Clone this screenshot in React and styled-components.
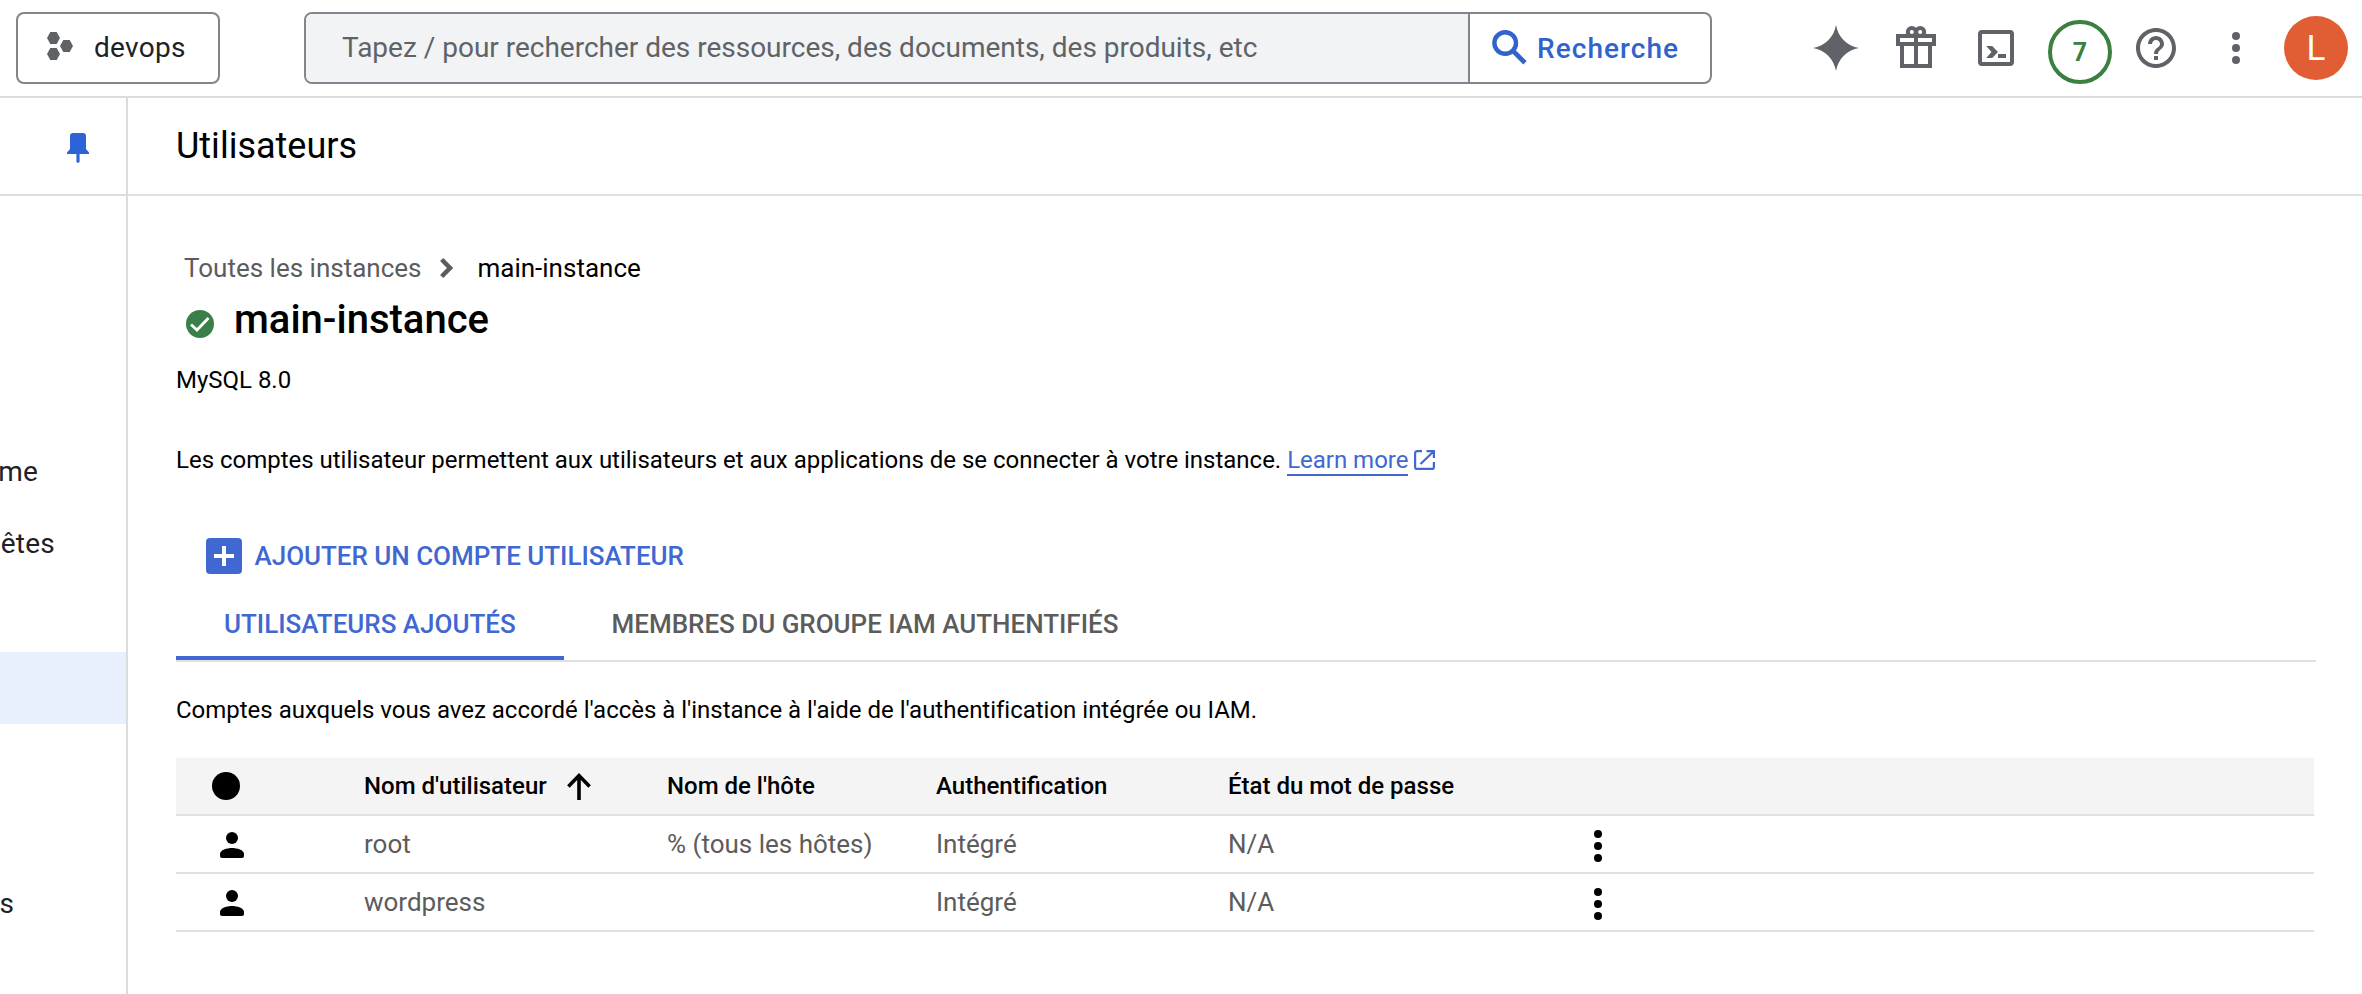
import React from "react";
import styled, { createGlobalStyle } from "styled-components";

const GlobalStyle = createGlobalStyle`
  * { box-sizing: border-box; }
  body { margin: 0; background: #fff; color: #000; font-family: Roboto, "Liberation Sans", sans-serif; overflow: hidden; }
  button, h1, h2, p { margin: 0; padding: 0; font: inherit; }
  button { border: 0; background: none; color: inherit; }
  svg { display: block; flex: none; }
`;

const Page = styled.div`
  height: 994px;
  display: flex;
  flex-direction: column;
  overflow: hidden;
`;

const TopBar = styled.header`
  flex: none;
  height: 98px;
  border-bottom: 2px solid #dadce0;
  padding: 0 14px 0 16px;
  display: flex;
  align-items: center;
`;

const ProjectButton = styled.button`
  width: 204px;
  height: 72px;
  border: 2px solid #80868b;
  border-radius: 8px;
  padding-left: 28px;
  display: flex;
  align-items: center;
  gap: 20px;
  font-size: 28px;
  line-height: 34px;
  letter-spacing: 0.3px;
  color: #202124;
`;

const SearchBar = styled.div`
  width: 1408px;
  height: 72px;
  margin-left: 84px;
  border: 2px solid #80868b;
  border-radius: 8px;
  display: flex;
  overflow: hidden;
`;

const SearchField = styled.div`
  width: 1164px;
  border-right: 2px solid #80868b;
  background: #f1f3f4;
  padding-left: 36px;
  line-height: 68px;
  font-size: 28px;
  letter-spacing: -0.01px;
  color: #5f6368;
`;

const SearchButton = styled.button`
  display: flex;
  align-items: center;
  padding-left: 22px;
  gap: 9px;
  font-size: 28px;
  font-weight: 500;
  letter-spacing: 1.05px;
  color: #3063cc;
`;

const Tools = styled.div`
  margin-left: auto;
  display: flex;
  align-items: center;
  color: #5f6368;
`;

const Tool = styled.div`
  width: 80px;
  display: flex;
  justify-content: center;
`;

const CountBadge = styled.div`
  width: 64px;
  height: 64px;
  margin: 8px 4px 0 12px;
  border: 4px solid #3b8040;
  border-radius: 50%;
  color: #3b8040;
  display: flex;
  align-items: center;
  justify-content: center;
  font-size: 25px;
  font-weight: 700;
`;

const Avatar = styled.div`
  width: 64px;
  height: 64px;
  margin-left: 8px;
  border-radius: 50%;
  background: #e15d33;
  color: #fff;
  text-align: center;
  line-height: 66px;
  font-size: 35px;
`;

const Body = styled.div`
  flex: 1;
  display: flex;
`;

const Sidebar = styled.nav`
  flex: none;
  width: 128px;
  border-right: 2px solid #dadce0;
`;

const PinRow = styled.div`
  height: 98px;
  border-bottom: 2px solid #dadce0;
  display: flex;
  align-items: center;
  justify-content: flex-end;
  padding: 4px 37px 0 0;
  color: #2c64d8;
`;

const NavList = styled.div`
  padding-top: 240px;
`;

const NavItem = styled.div`
  height: 72px;
  line-height: 71px;
  text-indent: ${(p) => p.$indent || 0}px;
  font-size: 28px;
  letter-spacing: 0.2px;
  color: #202124;
  background: ${(p) => (p.$active ? "#e8f0fe" : "transparent")};
`;

const Main = styled.main`
  flex: 1;
`;

const PageTitle = styled.h1`
  height: 98px;
  border-bottom: 2px solid #e0e0e0;
  padding-left: 48px;
  line-height: 96px;
  font-size: 36px;
  font-weight: 400;
`;

const Content = styled.div`
  padding: 54px 46px 0 48px;
`;

const Breadcrumb = styled.div`
  display: flex;
  align-items: center;
  padding-left: 8px;
  line-height: 36px;
  font-size: 26px;
`;

const CrumbLink = styled.span`
  color: #5c5c5c;
  margin-right: 18px;
`;

const CrumbCurrent = styled.span`
  margin-left: 23px;
`;

const InstanceRow = styled.div`
  display: flex;
  align-items: center;
  margin-top: 10px;
  padding-left: 10px;
  gap: 20px;
  svg { margin-top: 8px; }
`;

const InstanceName = styled.h2`
  line-height: 48px;
  font-size: 40px;
  font-weight: 500;
`;

const Text = styled.p`
  margin-top: ${(p) => p.$top}px;
  line-height: 32px;
  font-size: 24px;
  letter-spacing: -0.012px;
  display: flex;
  align-items: center;
  white-space: pre;
`;

const LearnMore = styled.a`
  height: 32px;
  border-bottom: 2px solid #4068d0;
  color: #4068d0;
  margin-right: 6px;
`;

const AddButton = styled.button`
  margin: 62px 0 0 30px;
  height: 36px;
  display: flex;
  align-items: center;
  gap: 12.5px;
  font-size: 26px;
  font-weight: 500;
  letter-spacing: -0.02px;
  color: #4068d0;
`;

const Tabs = styled.div`
  margin-top: 14px;
  height: 74px;
  border-bottom: 2px solid #e0e0e0;
  display: flex;
`;

const Tab = styled.button`
  height: 72px;
  padding: 0 48px;
  line-height: 72px;
  font-size: 26px;
  font-weight: 500;
  letter-spacing: -0.02px;
  color: ${(p) => (p.$active ? "#4068d0" : "#5c5c5c")};
  box-shadow: ${(p) => (p.$active ? "inset 0 -4px #4068d0" : "none")};
`;

const Table = styled.div`
  margin: 32px 2px 0 0;
`;

const Row = styled.div`
  display: grid;
  grid-template-columns: 188px 303px 269px 292px 366px 1fr;
  align-items: center;
  height: 58px;
  border-bottom: 2px solid #e0e0e0;
  font-size: 26px;
  color: #5c5c5c;
`;

const HeadRow = styled(Row)`
  background: #f4f4f4;
  font-size: 24px;
  font-weight: 500;
  color: #000;
`;

const Sortable = styled.div`
  display: flex;
  align-items: center;
  gap: 20px;
`;

const IconCell = styled.div`
  padding: ${(p) => p.$top || 0}px 0 0 ${(p) => p.$left}px;
  color: #000;
`;

const ProjectIcon = () => (
  <svg width="28" height="32" viewBox="0 0 28 32" fill="#5f6368">
    <path d="M4.3 0h6.4l3.3 6-3.3 6H4.3L1 6zM17.3 8h6.4l3.3 6-3.3 6h-6.4L14 14zM4.3 16h6.4l3.3 6-3.3 6H4.3L1 22z" />
  </svg>
);

const SearchIcon = () => (
  <svg width="36" height="36" viewBox="0 0 36 36" fill="none" stroke="currentColor">
    <circle cx="13.2" cy="13" r="10.8" strokeWidth="4.4" />
    <path d="M20.8 20.6 33 32.8" strokeWidth="4.8" />
  </svg>
);

const SparkIcon = () => (
  <svg width="46" height="46" viewBox="0 0 46 46" fill="currentColor">
    <path d="M23 0C25 12 34 21 46 23C34 25 25 34 23 46C21 34 12 25 0 23C12 21 21 12 23 0Z" />
  </svg>
);

const GiftIcon = () => (
  <svg width="40" height="44" viewBox="0 0 40 44" fill="none" stroke="currentColor" strokeWidth="4">
    <path d="M2 10h36v8H2zM6 18v22h28V18M20 10v30" />
    <circle cx="15.8" cy="6" r="4" />
    <circle cx="24.2" cy="6" r="4" />
  </svg>
);

const ShellIcon = () => (
  <svg width="36" height="36" viewBox="0 0 36 36" fill="currentColor">
    <rect x="2" y="2" width="32" height="32" rx="2" fill="none" stroke="currentColor" strokeWidth="4" />
    <path d="M8.2 16h6l5.8 6-5.8 6h-6l5.3-6zM20 24h8v4h-8z" />
  </svg>
);

const HelpIcon = () => (
  <svg width="48" height="48" viewBox="0 0 24 24" fill="currentColor">
    <path d="M11 18h2v-2h-2v2zm1-16C6.48 2 2 6.48 2 12s4.48 10 10 10 10-4.48 10-10S17.52 2 12 2zm0 18c-4.41 0-8-3.59-8-8s3.59-8 8-8 8 3.59 8 8-3.59 8-8 8zm0-14c-2.21 0-4 1.79-4 4h2c0-1.1.9-2 2-2s2 .9 2 2c0 2-3 1.75-3 5h2c0-2.25 3-2.5 3-5 0-2.21-1.79-4-4-4z" />
  </svg>
);

const MoreIcon = () => (
  <svg width="8" height="32" viewBox="0 0 8 32" fill="currentColor">
    <circle cx="4" cy="4" r="4" />
    <circle cx="4" cy="16" r="4" />
    <circle cx="4" cy="28" r="4" />
  </svg>
);

const PinIcon = () => (
  <svg width="22" height="30" viewBox="0 0 22 30" fill="currentColor">
    <path d="M6 0h10a3 3 0 0 1 3 3v13l3 3.5V21H12.6v8L11 30l-1.6-1v-8H0v-1.5L3 16V3a3 3 0 0 1 3-3z" />
  </svg>
);

const ChevronIcon = () => (
  <svg width="15" height="22" viewBox="0 0 15 22" fill="none" stroke="#5c5c5c" strokeWidth="4.6">
    <path d="M2.7 2.5 11 11 2.7 19.5" />
  </svg>
);

const CheckIcon = () => (
  <svg width="28" height="28" viewBox="0 0 28 28">
    <circle cx="14" cy="14" r="14" fill="#3a7f47" />
    <path d="m5 14.5 6 5.5L22.5 8" fill="none" stroke="#fff" strokeWidth="2.8" />
  </svg>
);

const ExternalIcon = () => (
  <svg width="21" height="20" viewBox="0 0 21 20" fill="none" stroke="#4068d0" strokeWidth="2.2">
    <path d="M8 1.1H3.1a2 2 0 0 0-2 2v13.8a2 2 0 0 0 2 2h14.8a2 2 0 0 0 2-2V12M12.5 1.1h7.4V8M19.5 1.5 6.5 14" />
  </svg>
);

const PlusIcon = () => (
  <svg width="36" height="36" viewBox="0 0 36 36">
    <rect width="36" height="36" rx="4" fill="#4068d0" />
    <path d="M8 18h20M18 8v20" stroke="#fff" strokeWidth="4" />
  </svg>
);

const DotIcon = () => (
  <svg width="28" height="28" viewBox="0 0 28 28">
    <circle cx="14" cy="14" r="14" />
  </svg>
);

const ArrowUpIcon = () => (
  <svg width="24" height="27" viewBox="0 0 24 27" fill="none" stroke="#000" strokeWidth="3.6">
    <path d="M12 27V3M1.4 13.4 12 2.6 22.6 13.4" />
  </svg>
);

const PersonIcon = () => (
  <svg width="24" height="26" viewBox="0 0 24 26">
    <circle cx="12" cy="6" r="6" />
    <path d="M0 22c0-4 7-6 12-6s12 2 12 6v2a2 2 0 0 1-2 2H2a2 2 0 0 1-2-2z" />
  </svg>
);

const users = [
  { name: "root", host: "% (tous les hôtes)", auth: "Intégré", state: "N/A" },
  { name: "wordpress", host: "", auth: "Intégré", state: "N/A" },
];

const navItems = [
  { label: "me", indent: -1.8 },
  { label: "êtes", indent: 0.8 },
  { label: "" },
  { label: "", active: true },
  { label: "" },
  { label: "" },
  { label: "s", indent: -0.5 },
];

export default function App() {
  return (
    <Page>
      <GlobalStyle />
      <TopBar>
        <ProjectButton>
          <ProjectIcon />
          devops
        </ProjectButton>
        <SearchBar>
          <SearchField>Tapez / pour rechercher des ressources, des documents, des produits, etc</SearchField>
          <SearchButton>
            <SearchIcon />
            Recherche
          </SearchButton>
        </SearchBar>
        <Tools>
          <Tool><SparkIcon /></Tool>
          <Tool><GiftIcon /></Tool>
          <Tool><ShellIcon /></Tool>
          <CountBadge>7</CountBadge>
          <Tool><HelpIcon /></Tool>
          <Tool><MoreIcon /></Tool>
          <Avatar>L</Avatar>
        </Tools>
      </TopBar>
      <Body>
        <Sidebar>
          <PinRow><PinIcon /></PinRow>
          <NavList>
            {navItems.map((item, i) => (
              <NavItem key={i} $active={item.active} $indent={item.indent}>{item.label}</NavItem>
            ))}
          </NavList>
        </Sidebar>
        <Main>
          <PageTitle>Utilisateurs</PageTitle>
          <Content>
            <Breadcrumb>
              <CrumbLink>Toutes les instances</CrumbLink>
              <ChevronIcon />
              <CrumbCurrent>main-instance</CrumbCurrent>
            </Breadcrumb>
            <InstanceRow>
              <CheckIcon />
              <InstanceName>main-instance</InstanceName>
            </InstanceRow>
            <Text $top={20}>MySQL 8.0</Text>
            <Text $top={48}>
              {"Les comptes utilisateur permettent aux utilisateurs et aux applications de se connecter à votre instance. "}
              <LearnMore>Learn more</LearnMore>
              <ExternalIcon />
            </Text>
            <AddButton>
              <PlusIcon />
              AJOUTER UN COMPTE UTILISATEUR
            </AddButton>
            <Tabs>
              <Tab $active>UTILISATEURS AJOUTÉS</Tab>
              <Tab>MEMBRES DU GROUPE IAM AUTHENTIFIÉS</Tab>
            </Tabs>
            <Text $top={32}>Comptes auxquels vous avez accordé l'accès à l'instance à l'aide de l'authentification intégrée ou IAM.</Text>
            <Table>
              <HeadRow>
                <IconCell $left={36}><DotIcon /></IconCell>
                <Sortable>Nom d'utilisateur<ArrowUpIcon /></Sortable>
                <span>Nom de l'hôte</span>
                <span>Authentification</span>
                <span>État du mot de passe</span>
              </HeadRow>
              {users.map((user) => (
                <Row key={user.name}>
                  <IconCell $left={44} $top={2}><PersonIcon /></IconCell>
                  <span>{user.name}</span>
                  <span>{user.host}</span>
                  <span>{user.auth}</span>
                  <span>{user.state}</span>
                  <IconCell $left={0} $top={4}><MoreIcon /></IconCell>
                </Row>
              ))}
            </Table>
          </Content>
        </Main>
      </Body>
    </Page>
  );
}
